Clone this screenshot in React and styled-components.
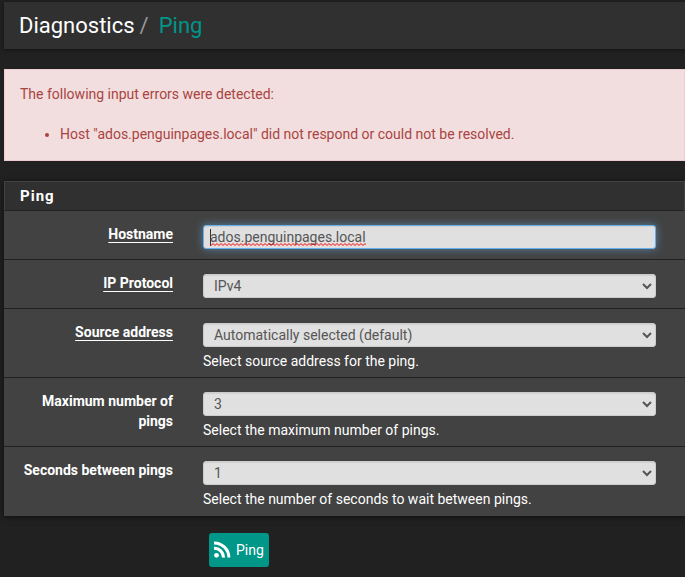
import React, { useState } from "react";
import styled, { createGlobalStyle, css } from "styled-components";

const GlobalStyle = createGlobalStyle`
  *, *::before, *::after { box-sizing: border-box; }
  body {
    margin: 0;
    background: #212121;
    color: #fff;
    font: 14px/20px Roboto, sans-serif;
  }
`;

const Page = styled.div`
  display: flex;
  flex-direction: column;
  gap: 20px;
  padding: 2px 0 0 4px;
`;

const PageHeader = styled.header`
  padding: 12px 15px 11px;
  background: #303030;
  box-shadow: 0 1px 4px rgba(0, 0, 0, 0.5);
`;

const Breadcrumb = styled.h1`
  display: flex;
  margin: 0;
  font-size: 22px;
  font-weight: 400;
  line-height: 24px;
`;

const Separator = styled.span`
  padding: 0 10px 0 5px;
  color: #999;
`;

const CrumbLink = styled.a`
  color: #009688;
  text-decoration: none;
`;

const ErrorAlert = styled.section`
  padding: 14px 15px 16px;
  border: 1px solid #ebccd1;
  background: #f2dede;
  color: #a94442;
`;

const ErrorTitle = styled.p`
  margin: 0 0 20px;
`;

const ErrorList = styled.ul`
  margin: 0;
  padding-left: 40px;
`;

const Form = styled.form`
  display: flex;
  flex-direction: column;
  gap: 17px;
`;

const Panel = styled.section`
  padding-bottom: 1px;
  background: #424242;
  box-shadow: 0 1px 6px rgba(0, 0, 0, 0.6);
`;

const PanelTitle = styled.h2`
  margin: 0;
  padding: 4px 15px;
  border: 1px solid #424242;
  border-bottom-color: #212121;
  background: #303030;
  font-size: 15px;
  font-weight: 700;
  line-height: 20px;
  letter-spacing: 1px;
`;

const Row = styled.div`
  display: grid;
  grid-template-columns: 169px 1fr;
  column-gap: 30px;
  padding: 13px 29px ${(p) => (p.$helped ? 6 : 10)}px 0;

  & + & { border-top: 1px solid #212121; }
`;

const LabelCell = styled.div`
  padding-left: 15px;
  text-align: right;
`;

const ControlCell = styled.div`
  position: relative;
  padding-top: 1px;
`;

const Label = styled.label`
  font-weight: 700;
  ${(p) => p.$required && css`
    text-decoration: underline 1px;
    text-underline-offset: 3px;
    text-decoration-skip-ink: none;
  `}
`;

const control = css`
  display: block;
  width: 100%;
  height: 24px;
  padding: 0 6px;
  border: 1px solid #ccc;
  border-radius: 3px;
  background-color: #e0e0e0;
  color: #555;
  font: inherit;
  outline: none;
  box-shadow: inset 0 1px 1px rgba(0, 0, 0, 0.075);
`;

const TextInput = styled.input`
  ${control}
  border-color: #66afe9;
  box-shadow: inset 0 1px 1px rgba(0, 0, 0, 0.075), 0 0 8px rgba(102, 175, 233, 0.6);
  background-image: linear-gradient(#333, #333);
  background-repeat: no-repeat;
  background-size: 1px 17px;
  background-position: 6px 3px;
`;

const Squiggle = styled.svg`
  position: absolute;
  left: 7px;
  top: 19px;
  pointer-events: none;
`;

const Select = styled.select`
  ${control}
`;

const Help = styled.span`
  display: block;
  padding-top: 4px;
`;

const Actions = styled.div`
  display: flex;
  padding-left: 205px;
`;

const SubmitButton = styled.button`
  display: flex;
  align-items: center;
  gap: 5px;
  height: 34px;
  padding: 0 5px 1px;
  border: 0;
  border-radius: 3px;
  background: #009688;
  color: #fff;
  font: inherit;
  cursor: pointer;
`;

const RssIcon = () => (
  <svg width="17" height="17" viewBox="0 0 17 17" aria-hidden="true">
    <circle cx="2.5" cy="14.3" r="2.4" fill="#fff" />
    <path d="M0 7.2A9.2 9.2 0 0 1 9.4 16.6M0 1.9A14.7 14.7 0 0 1 14.9 16.6" fill="none" stroke="#fff" strokeWidth="3" />
  </svg>
);

const SpellingMark = () => (
  <Squiggle width="156" height="3" aria-hidden="true">
    <defs>
      <pattern id="wave" width="4" height="3" patternUnits="userSpaceOnUse">
        <path d="M-1 .5L1 2.5L3 .5L5 2.5" fill="none" stroke="#f00" />
      </pattern>
    </defs>
    <rect width="156" height="3" fill="url(#wave)" />
  </Squiggle>
);

function Field({ id, label, required, help, children }) {
  return (
    <Row $helped={Boolean(help)}>
      <LabelCell>
        <Label htmlFor={id} $required={required}>{label}</Label>
      </LabelCell>
      <ControlCell>
        {children}
        {help && <Help id={`${id}-help`}>{help}</Help>}
      </ControlCell>
    </Row>
  );
}

const selects = [
  { id: "ipproto", label: "IP Protocol", required: true, options: ["IPv4", "IPv6"] },
  { id: "source", label: "Source address", required: true, options: ["Automatically selected (default)"], help: "Select source address for the ping." },
  { id: "count", label: "Maximum number of pings", options: ["3", "4", "5"], help: "Select the maximum number of pings." },
  { id: "wait", label: "Seconds between pings", options: ["1", "2", "3"], help: "Select the number of seconds to wait between pings." },
];

const initialHost = "ados.penguinpages.local";

export default function App() {
  const [host, setHost] = useState(initialHost);
  return (
    <>
      <GlobalStyle />
      <Page>
        <PageHeader>
          <Breadcrumb>
            Diagnostics<Separator>/</Separator><CrumbLink href="#ping">Ping</CrumbLink>
          </Breadcrumb>
        </PageHeader>
        <ErrorAlert role="alert">
          <ErrorTitle>The following input errors were detected:</ErrorTitle>
          <ErrorList>
            <li>Host "ados.penguinpages.local" did not respond or could not be resolved.</li>
          </ErrorList>
        </ErrorAlert>
        <Form id="ping" onSubmit={(e) => e.preventDefault()}>
          <Panel>
            <PanelTitle>Ping</PanelTitle>
            <Field id="host" label="Hostname" required>
              <TextInput id="host" type="text" value={host} onChange={(e) => setHost(e.target.value)} />
              {host === initialHost && <SpellingMark />}
            </Field>
            {selects.map(({ id, label, required, help, options }) => (
              <Field key={id} id={id} label={label} required={required} help={help}>
                <Select id={id} aria-describedby={help ? `${id}-help` : undefined}>
                  {options.map((o) => <option key={o}>{o}</option>)}
                </Select>
              </Field>
            ))}
          </Panel>
          <Actions>
            <SubmitButton type="submit"><RssIcon />Ping</SubmitButton>
          </Actions>
        </Form>
      </Page>
    </>
  );
}
